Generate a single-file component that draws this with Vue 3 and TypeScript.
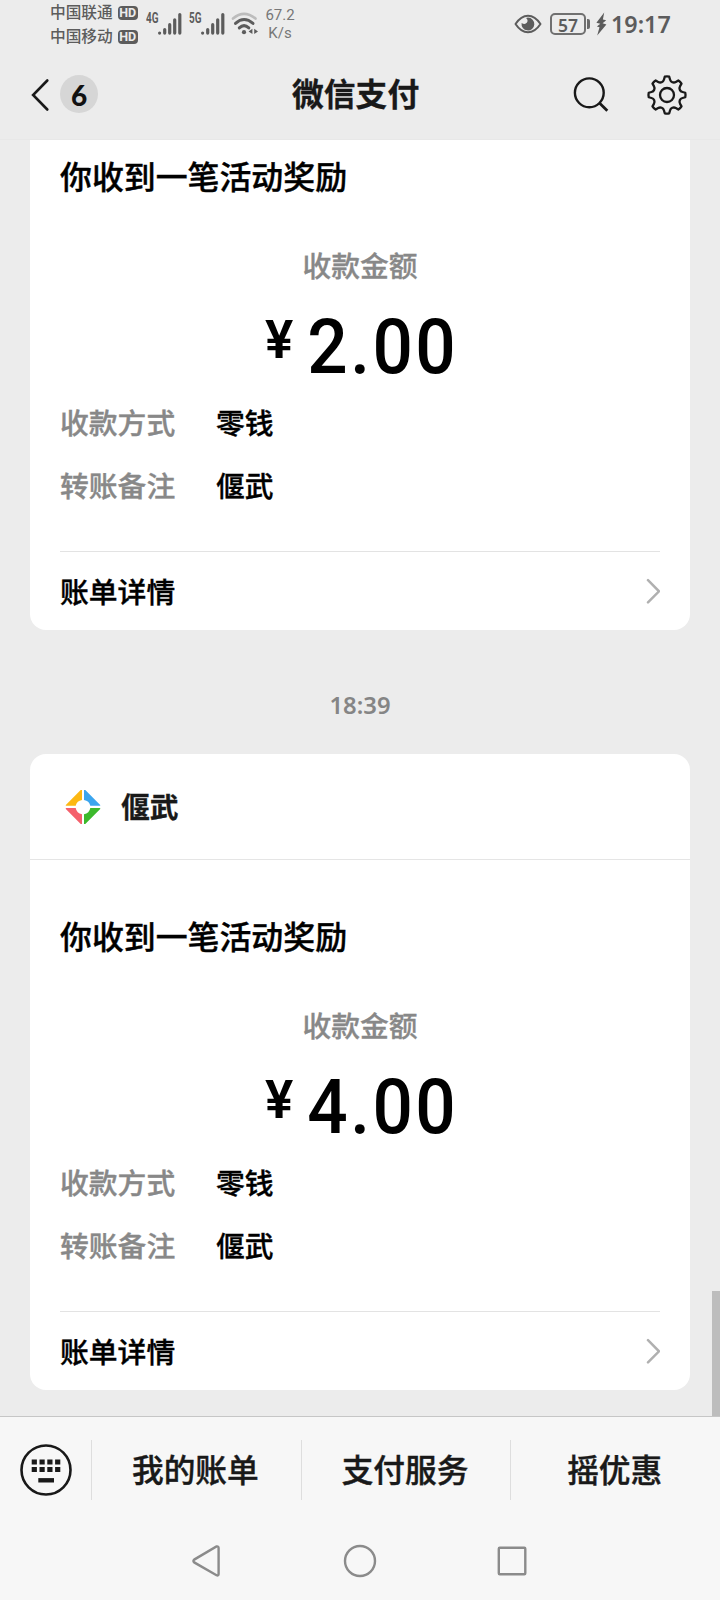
<script setup lang="ts">
interface Field {
  label: string
  value: string
}

interface Message {
  id: number
  time?: string
  payer?: string
  title: string
  amount: string
  fields: Field[]
}

const fields: Field[] = [
  { label: '收款方式', value: '零钱' },
  { label: '转账备注', value: '偃武' },
]

const messages: Message[] = [
  { id: 1, title: '你收到一笔活动奖励', amount: '2.00', fields },
  { id: 2, time: '18:39', payer: '偃武', title: '你收到一笔活动奖励', amount: '4.00', fields },
]

const menu: string[] = ['我的账单', '支付服务', '摇优惠']
const carriers: string[] = ['中国联通', '中国移动']
const networks: string[] = ['4G', '5G']

// Outline of an eight-tooth cog centred on (20, 20).
function cogPath(): string {
  const at = (r: number, deg: number): string => {
    const a = (deg * Math.PI) / 180
    return `${(20 + r * Math.sin(a)).toFixed(2)} ${(20 - r * Math.cos(a)).toFixed(2)}`
  }
  let d = `M${at(18.4, -7)}`
  for (let i = 0; i < 8; i++) {
    const b = i * 45
    d += ` Q${at(18.8, b)} ${at(18.4, b + 7)}`
    d += ` L${at(15.8, b + 11)}`
    d += ` C${at(13.4, b + 16)} ${at(13.4, b + 29)} ${at(15.8, b + 34)}`
    d += ` L${at(18.4, b + 38)}`
  }
  return d + 'Z'
}
const cog = cogPath()
</script>

<template>
  <div class="screen">
    <header class="top">
      <div class="status">
        <div class="carriers">
          <div v-for="c in carriers" :key="c" class="carrier">
            <span>{{ c }}</span><span class="hd">HD</span>
          </div>
        </div>
        <svg v-for="n in networks" :key="n" class="signal" viewBox="0 -4 36 32" width="36" height="32">
          <text x="0" y="11" class="gen" textLength="12.5" lengthAdjust="spacingAndGlyphs">{{ n }}</text>
          <g stroke="#5c5c5c" stroke-width="3.2" stroke-linecap="round">
            <path d="M13.6 21v.1M18.7 17.5v3.6M23.7 12.7v8.4M28.7 7.8v13.3M33.8 2.6v18.5" />
          </g>
        </svg>
        <svg class="wifi" viewBox="0 0 28 24" width="28" height="24" fill="none" stroke-linecap="round">
          <path d="M2 6.6Q13 -2.8 24.5 6.6" stroke="#bcbcbc" stroke-width="2.6" />
          <path d="M4.5 11.4Q13 3.6 22 11.4" stroke="#5c5c5c" stroke-width="3" />
          <path d="M8.3 15.9Q13 11.4 17.8 15.9" stroke="#5c5c5c" stroke-width="3" />
          <circle cx="13" cy="20.2" r="2.1" fill="#5c5c5c" />
          <path d="M17.6 19.4L21.4 16.8V22zM27 19.4L23.2 16.8V22z" fill="#5c5c5c" />
        </svg>
        <div class="speed"><span>67.2</span><span>K/s</span></div>
        <div class="status-right">
          <svg viewBox="0 0 28 20" width="28" height="20">
            <path d="M1.5 10Q7 1.7 14 1.7T26.5 10Q21 18.3 14 18.3T1.5 10Z" fill="none" stroke="#5c5c5c" stroke-width="2" stroke-linejoin="round" />
            <path d="M14 3.6A6.4 6.4 0 1 1 7.6 9Q11 11 13 8.5Q14.5 6 12 4Z" fill="#5c5c5c" />
          </svg>
          <div class="battery">57</div>
          <i class="battery-tip"></i>
          <svg class="bolt" viewBox="0 0 11 24" width="11" height="24">
            <path d="M8.2 .5L.4 10.8L4.3 11.7L.9 14.5L3.5 15.2L1.2 23.5L10.4 12.6L6.6 11.3L10.2 8.3L6.9 7.6Z" fill="#5c5c5c" />
          </svg>
          <span class="clock">19:17</span>
        </div>
      </div>

      <div class="nav">
        <svg class="back" viewBox="0 0 20 34" width="20" height="34">
          <path d="M17.3 2.5L3.1 17L17.3 31.5" fill="none" stroke="#191919" stroke-width="2.6" stroke-linecap="round" />
        </svg>
        <span class="unread">6</span>
        <h1>微信支付</h1>
        <svg class="search" viewBox="0 0 38 38" width="38" height="38" fill="none" stroke="#191919">
          <circle cx="17.3" cy="16.8" r="14.4" stroke-width="2.4" />
          <path d="M27.7 27.2L35.3 34.7" stroke-width="2.8" />
        </svg>
        <svg class="gear" viewBox="0 0 40 40" width="40" height="40" fill="none" stroke="#191919" stroke-width="2.3" stroke-linejoin="round">
          <path :d="cog" />
          <circle cx="20" cy="20" r="7" />
        </svg>
      </div>
    </header>

    <main class="feed">
      <template v-for="m in messages" :key="m.id">
        <time v-if="m.time">{{ m.time }}</time>
        <article class="card" :class="{ cut: !m.payer }">
          <div v-if="m.payer" class="payer">
            <svg viewBox="0 0 36 36" width="36" height="36">
              <path d="M17 1V11A7.6 7.6 0 0 0 10.7 16.8H.8V16L15.7 1Z" fill="#fcb813" />
              <path d="M19 1V11A7.6 7.6 0 0 1 25.3 16.8H35.2V16L20.3 1Z" fill="#3ba5ee" />
              <path d="M17 35V25.2A7.6 7.6 0 0 1 10.7 19H.8V20L15.7 35Z" fill="#f4606c" />
              <path d="M19 35V25.2A7.6 7.6 0 0 0 25.3 19H35.2V20L20.3 35Z" fill="#3cb92c" />
            </svg>
            <span>{{ m.payer }}</span>
          </div>
          <div class="body">
            <h2>{{ m.title }}</h2>
            <p class="caption">收款金额</p>
            <p class="amount"><span class="yen">¥</span><span class="digits">{{ m.amount }}</span></p>
            <dl>
              <div v-for="f in m.fields" :key="f.label">
                <dt>{{ f.label }}</dt>
                <dd>{{ f.value }}</dd>
              </div>
            </dl>
            <div class="detail">
              <span>账单详情</span>
              <svg viewBox="0 0 16 26" width="16" height="26">
                <path d="M4 2.2L15 13.3L4 24.3" fill="none" stroke="#b0b0b0" stroke-width="2.5" stroke-linecap="round" />
              </svg>
            </div>
          </div>
        </article>
      </template>
      <i class="scrollbar"></i>
    </main>

    <footer class="menu">
      <div class="keyboard">
        <svg viewBox="0 0 52 52" width="52" height="52">
          <circle cx="26" cy="26" r="24.5" fill="none" stroke="#191919" stroke-width="2.6" />
          <path d="M11.7 18H40.5M11.7 25.6H40.5" stroke="#191919" stroke-width="5" stroke-dasharray="5.2 2.6" />
          <path d="M18.3 36.3H34" stroke="#191919" stroke-width="4.4" />
        </svg>
      </div>
      <div v-for="item in menu" :key="item" class="item"><span>{{ item }}</span></div>
    </footer>
    <div class="system">
      <svg viewBox="0 0 34 34" width="34" height="34"><path d="M25.5 2.5Q27.6 2 27.6 4V30Q27.6 32 25.5 31.2L3.2 18.4Q1.6 17 3.2 15.6Z" /></svg>
      <svg viewBox="0 0 34 34" width="34" height="34"><circle cx="17" cy="17" r="15" /></svg>
      <svg viewBox="0 0 34 34" width="34" height="34"><rect x="3.8" y="3.8" width="26.5" height="26.5" rx="1" /></svg>
    </div>
  </div>
</template>

<style>
body {
  margin: 0;
}
</style>

<style scoped>
.screen {
  width: 720px;
  height: 1600px;
  display: flex;
  flex-direction: column;
  overflow: hidden;
  background: #ececec;
  color: #000;
  font-family: "Noto Sans CJK SC", sans-serif;
}
h1, h2, p, dl, dd, dt {
  margin: 0;
}
svg {
  display: block;
  flex: none;
}
.top {
  height: 140px;
  border-bottom: 1px solid #e8e8e8;
  box-sizing: border-box;
  flex: none;
}
.status {
  height: 48px;
  padding: 0 50px 0 50px;
  display: flex;
  align-items: center;
  color: #5c5c5c;
}
.carriers {
  width: 89px;
  margin-right: 7px;
}
.carrier {
  height: 24px;
  display: flex;
  align-items: center;
  font-size: 15.7px;
  line-height: 24px;
  font-weight: 500;
}
.hd {
  width: 20px;
  height: 14px;
  margin: 1px 0 0 5px;
  border-radius: 4px;
  background: #5c5c5c;
  color: #ececec;
  font: 700 12.5px/14px Roboto, sans-serif;
  text-align: center;
}
.signal {
  margin-right: 7px;
}
.gen {
  font: 700 14px Roboto, sans-serif;
  fill: #5c5c5c;
}
.wifi {
  margin-left: -1px;
}
.speed {
  margin-left: 6px;
  width: 30px;
  display: flex;
  flex-direction: column;
  text-align: center;
  font: 400 15px/18px Roboto, sans-serif;
  color: #777;
}
.status-right {
  margin-left: auto;
  display: flex;
  align-items: center;
}
.battery {
  width: 32px;
  height: 18px;
  margin-left: 8px;
  border: 2px solid #707070;
  border-radius: 5px;
  font: 600 17.5px/20px "Noto Sans", sans-serif;
  text-align: center;
}
.battery-tip {
  width: 3px;
  height: 10px;
  margin-left: 1px;
  border-radius: 0 2px 2px 0;
  background: #6a6a6a;
}
.bolt {
  margin-left: 6px;
}
.clock {
  width: 59px;
  margin-left: 4px;
  font: 600 23.3px/30px "Noto Sans", sans-serif;
  white-space: nowrap;
}
.nav {
  height: 92px;
  padding: 1px 33px 0 30px;
  box-sizing: border-box;
  display: flex;
  align-items: center;
}
.unread {
  width: 38px;
  height: 38px;
  margin-left: 10px;
  margin-top: -1px;
  border-radius: 50%;
  background: #d6d6d6;
  color: #111;
  font: 900 28px/40px Lato, sans-serif;
  text-align: center;
}
.nav h1 {
  width: 128px;
  margin-left: 194px;
  margin-top: -5px;
  color: #191919;
  font-size: 31.8px;
  line-height: 44px;
  font-weight: 700;
  -webkit-text-stroke: 0.3px currentColor;
}
.search {
  margin-left: 152px;
  margin-right: 37px;
}
.feed {
  position: relative;
  height: 1276px;
  padding: 0 30px;
  flex: none;
}
time {
  display: block;
  height: 124px;
  color: #858585;
  font: 600 23.8px/150px "Noto Sans", sans-serif;
  text-align: center;
}
.card {
  background: #fff;
  border-radius: 16px;
}
.card.cut {
  border-radius: 0 0 16px 16px;
}
.payer {
  height: 106px;
  box-sizing: border-box;
  padding: 1px 0 0 35px;
  display: flex;
  align-items: center;
  gap: 20px;
  border-bottom: 1px solid #e5e5e5;
  color: #191919;
  font-size: 28.8px;
  font-weight: 700;
  -webkit-text-stroke: 0.3px currentColor;
}
.payer span {
  margin-top: -3px;
}
.body {
  padding: 53px 30px 0;
}
.cut .body {
  padding-top: 13px;
}
h2 {
  font-size: 31.9px;
  line-height: 44px;
  font-weight: 500;
  -webkit-text-stroke: 0.4px currentColor;
}
.caption {
  margin-top: 48px;
  color: #888;
  font-size: 28.8px;
  line-height: 40px;
  font-weight: 500;
  -webkit-text-stroke: 0.3px currentColor;
  text-align: center;
}
.amount {
  height: 107px;
  margin-top: 10px;
  display: flex;
  font-family: Roboto, sans-serif;
}
.yen {
  width: 31px;
  margin-left: 205px;
  font-size: 53px;
  line-height: 90px;
  font-weight: 600;
}
.digits {
  font-size: 76.5px;
  line-height: 105px;
  font-weight: 500;
  letter-spacing: 2.6px;
  transform: scaleX(0.93);
  transform-origin: right;
}
dl {
  height: 149px;
  font-size: 28.8px;
  font-weight: 500;
  -webkit-text-stroke: 0.35px currentColor;
  line-height: 40px;
}
dl div {
  display: flex;
  margin-bottom: 23px;
}
dt {
  width: 156px;
  color: #888;
}
.detail {
  height: 79px;
  box-sizing: border-box;
  border-top: 1px solid #e3e3e3;
  display: flex;
  align-items: center;
  justify-content: space-between;
  font-size: 28.8px;
  font-weight: 500;
  -webkit-text-stroke: 0.35px currentColor;
}
.detail span {
  margin-top: -1px;
}
.scrollbar {
  position: absolute;
  right: 0;
  bottom: 0;
  width: 8px;
  height: 125px;
  background: #bdbdbd;
}
.menu {
  height: 106px;
  flex: none;
  display: flex;
  align-items: center;
  border-top: 1px solid #c6c6c6;
  background: #f7f7f7;
  color: #191919;
  font-size: 31.7px;
  font-weight: 500;
  -webkit-text-stroke: 0.4px currentColor;
}
.keyboard {
  width: 71px;
  padding-left: 20px;
}
.item {
  height: 60px;
  flex: 1;
  display: flex;
  align-items: center;
  justify-content: center;
  border-left: 1px solid #dedede;
}
.item span {
  margin: -5px 2px 0 0;
}
.system {
  flex: 1;
  display: flex;
  justify-content: center;
  gap: 118px;
  padding-top: 21px;
  background: #f7f7f7;
}
.system svg {
  fill: none;
  stroke: #8b8b8b;
  stroke-width: 2.4;
}
</style>
